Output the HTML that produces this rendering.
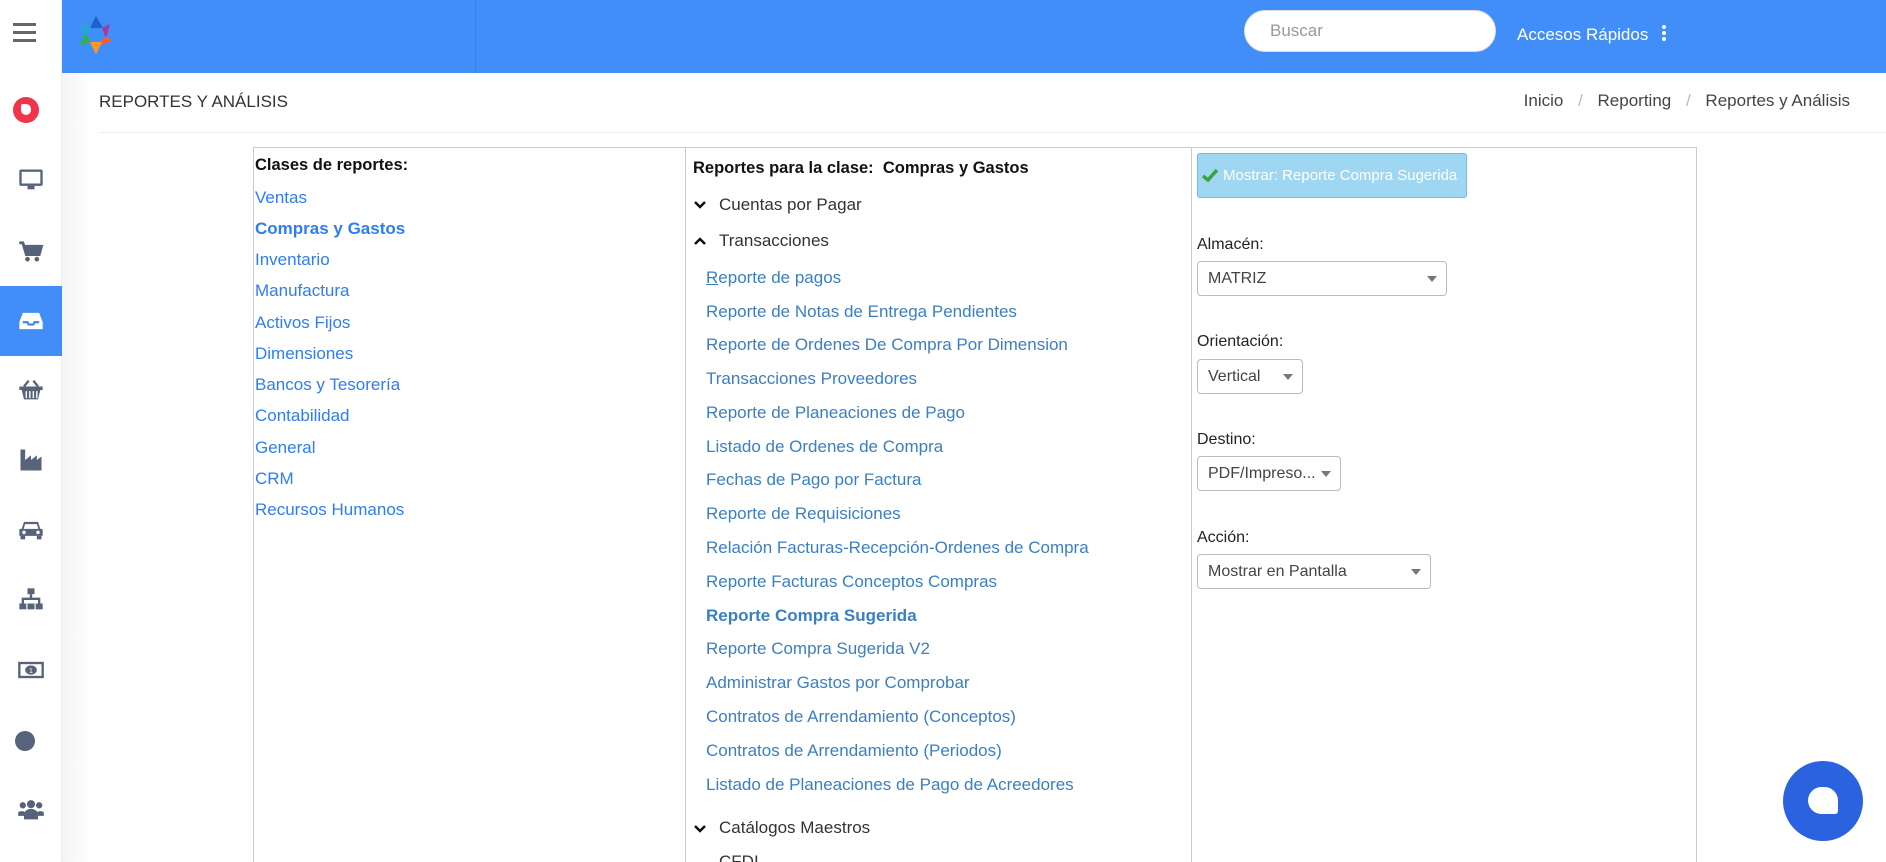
<!DOCTYPE html>
<html style="width:1886px;height:862px;overflow:hidden"><head><meta charset="utf-8">
<style>
*{box-sizing:border-box;margin:0;padding:0}
body{width:1886px;height:862px;overflow:hidden;background:#fff;font-family:"Liberation Sans",sans-serif;position:relative;color:#222}
.abs{position:absolute}
.side{left:0;top:0;width:62px;height:862px;background:#fff;border-right:1px solid #eee}
.hdr{left:62px;top:0;width:1824px;height:73px;background:#428ef8}
.ic{position:absolute;left:17px;width:28px;height:28px}
.t{position:absolute;white-space:nowrap}
.l1{color:#2e7cf6;font-size:17px}
.l2{color:#3a7fc4;font-size:17px}
.sel{position:absolute;border:1px solid #bbb;border-radius:4px;background:#fff;font-size:16px;color:#444;padding-left:10px;line-height:33px}
.sel:after{content:"";position:absolute;right:9px;top:14px;border-left:5px solid transparent;border-right:5px solid transparent;border-top:6px solid #777}
.lab{font-size:16px;color:#222}
</style></head><body>
<div class="abs side"></div>
<div class="abs" style="left:62px;top:73px;width:30px;height:789px;background:linear-gradient(90deg,#f4f4f4,#fff)"></div>
<div class="abs" style="left:13px;top:23px;width:23px;height:3px;background:#666"></div>
<div class="abs" style="left:13px;top:31px;width:23px;height:3px;background:#666"></div>
<div class="abs" style="left:13px;top:39px;width:23px;height:3px;background:#666"></div>
<div class="abs" style="left:13px;top:97px;width:26px;height:26px;border-radius:50%;background:#f0344a"></div>
<div class="abs" style="left:21px;top:104px;width:10px;height:11px;background:#fff;border-radius:2px 5px 5px 5px"></div>
<svg class="ic" style="top:166px" viewBox="0 0 24 24"><rect x="2" y="3" width="20" height="14" rx="1.5" fill="#56637a"/><rect x="4" y="5" width="16" height="10" fill="#fff"/><rect x="9" y="17" width="6" height="3" fill="#56637a"/></svg>
<svg class="ic" style="top:237px" viewBox="0 0 24 24"><path d="M2 5h3l3 10h11l2-7H7" fill="none" stroke="#56637a" stroke-width="2.5"/><circle cx="9" cy="19" r="2" fill="#56637a"/><circle cx="17" cy="19" r="2" fill="#56637a"/><rect x="7" y="8" width="13" height="6" fill="#56637a"/></svg>
<div class="abs" style="left:0;top:286px;width:62px;height:70px;background:#428ef8"></div>
<svg class="ic" style="top:307px" viewBox="0 0 24 24"><path d="M5 5h14l3 8v6H2v-6z" fill="#fff"/><path d="M5 13h4l1 2h4l1-2h4" stroke="#428ef8" stroke-width="2" fill="none"/></svg>
<svg class="ic" style="top:376px" viewBox="0 0 24 24"><path d="M6 9l4-5M18 9l-4-5" stroke="#56637a" stroke-width="2"/><rect x="2" y="9" width="20" height="3" fill="#56637a"/><path d="M4 12h16l-2 8H6z" fill="#56637a"/><path d="M8 13v6M11 13v6M14 13v6M17 13v6" stroke="#fff" stroke-width="1.2"/></svg>
<svg class="ic" style="top:446px" viewBox="0 0 24 24"><path d="M3 3h4v9l5-4v4l5-4v4l4-3v12H3z" fill="#56637a"/></svg>
<svg class="ic" style="top:516px" viewBox="0 0 24 24"><path d="M6 5h12l2 6h1a1 1 0 0 1 1 1v5H2v-5a1 1 0 0 1 1-1h1z" fill="#56637a"/><path d="M7 7h10l1.3 4H5.7z" fill="#fff"/><circle cx="6" cy="14" r="1.5" fill="#fff"/><circle cx="18" cy="14" r="1.5" fill="#fff"/><rect x="3" y="17" width="4" height="3" fill="#56637a"/><rect x="17" y="17" width="4" height="3" fill="#56637a"/></svg>
<svg class="ic" style="top:586px" viewBox="0 0 24 24"><rect x="9" y="2" width="6" height="5" fill="#56637a"/><path d="M12 7v4M5 15v-4h14v4" stroke="#56637a" stroke-width="2" fill="none"/><rect x="2" y="15" width="6" height="5" fill="#56637a"/><rect x="9" y="15" width="6" height="5" fill="#56637a"/><rect x="16" y="15" width="6" height="5" fill="#56637a"/></svg>
<svg class="ic" style="top:656px" viewBox="0 0 24 24"><rect x="1" y="5" width="22" height="14" fill="#56637a"/><rect x="3" y="7" width="18" height="10" fill="#fff"/><ellipse cx="12" cy="12" rx="5" ry="4" fill="#56637a"/><text x="10.3" y="14.5" font-size="6" fill="#fff" font-family="Liberation Sans">1</text></svg>
<div class="abs" style="left:15px;top:731px;width:20px;height:20px;border-radius:50%;background:#56637a"></div>
<svg class="ic" style="top:796px" viewBox="0 0 24 24"><circle cx="12" cy="7" r="3.5" fill="#56637a"/><circle cx="5" cy="8" r="2.7" fill="#56637a"/><circle cx="19" cy="8" r="2.7" fill="#56637a"/><path d="M6 20v-4a6 5 0 0 1 12 0v4z" fill="#56637a"/><path d="M1 17v-3a4 3 0 0 1 6 0v3zM17 17v-3a4 3 0 0 1 6 0v3z" fill="#56637a"/></svg>

<div class="abs hdr"></div>
<div class="abs" style="left:475px;top:0;width:1px;height:73px;background:#3a80e4"></div>
<svg class="abs" style="left:76px;top:14px" width="40" height="42" viewBox="0 0 40 42"><polygon points="20,2 27,14 14,14" fill="#1e62c9"/><polygon points="34,10 30,25 26,14" fill="#a53a9a"/><polygon points="36,27 22,32 30,22" fill="#ff5a2b"/><polygon points="20,40 14,28 26,28" fill="#ff9a1a"/><polygon points="4,32 10,18 14,28" fill="#2eb34a"/><polygon points="4,10 16,14 10,22" fill="#22a7d6"/></svg>
<div class="abs" style="left:1244px;top:10px;width:252px;height:42px;border-radius:21px;background:#fff;border:1px solid #ddd"></div>
<div class="t" style="left:1270px;top:21px;font-size:17px;color:#999">Buscar</div>
<div class="t" style="left:1517px;top:25px;font-size:17px;color:#fff">Accesos Rápidos</div>
<div class="abs" style="left:1662px;top:25px;width:4px;height:4px;border-radius:50%;background:#fff;box-shadow:0 6px 0 #fff,0 12px 0 #fff"></div>

<div class="t" style="left:99px;top:92px;font-size:17px;color:#333">REPORTES Y ANÁLISIS</div>
<div class="t" style="right:36px;top:91px;font-size:17px;color:#444">Inicio <span style="color:#bbb;margin:0 10px">/</span> Reporting <span style="color:#bbb;margin:0 10px">/</span> Reportes y Análisis</div>
<div class="abs" style="left:99px;top:132px;width:1787px;height:1px;background:#eee"></div>

<div class="abs" style="left:253px;top:147px;width:1444px;height:715px;border:1px solid #ccc;border-bottom:none"></div>
<div class="abs" style="left:685px;top:147px;width:1px;height:715px;background:#ccc"></div>
<div class="abs" style="left:1191px;top:147px;width:1px;height:715px;background:#ccc"></div>

<div class="t" style="left:255px;top:156px;font-size:16.5px;font-weight:bold;color:#111">Clases de reportes:</div>
<div class="t l1" style="left:255px;top:188px">Ventas</div>
<div class="t l1" style="left:255px;top:219px;font-weight:bold">Compras y Gastos</div>
<div class="t l1" style="left:255px;top:250px">Inventario</div>
<div class="t l1" style="left:255px;top:281px">Manufactura</div>
<div class="t l1" style="left:255px;top:313px">Activos Fijos</div>
<div class="t l1" style="left:255px;top:344px">Dimensiones</div>
<div class="t l1" style="left:255px;top:375px">Bancos y Tesorería</div>
<div class="t l1" style="left:255px;top:406px">Contabilidad</div>
<div class="t l1" style="left:255px;top:438px">General</div>
<div class="t l1" style="left:255px;top:469px">CRM</div>
<div class="t l1" style="left:255px;top:500px">Recursos Humanos</div>

<div class="t" style="left:693px;top:159px;font-size:16.5px;font-weight:bold;color:#111">Reportes para la clase:&nbsp; Compras y Gastos</div>
<svg class="abs" style="left:693px;top:200px" width="14" height="10"><path d="M2 2l5 5 5-5" stroke="#111" stroke-width="2.5" fill="none"/></svg>
<div class="t" style="left:719px;top:195px;font-size:17px;color:#333">Cuentas por Pagar</div>
<svg class="abs" style="left:693px;top:236px" width="14" height="10"><path d="M2 8l5-5 5 5" stroke="#111" stroke-width="2.5" fill="none"/></svg>
<div class="t" style="left:719px;top:231px;font-size:17px;color:#333">Transacciones</div>
<div class="t l2" style="left:706px;top:268px"><u style="text-decoration-thickness:1px">R</u>eporte de pagos</div>
<div class="t l2" style="left:706px;top:302px">Reporte de Notas de Entrega Pendientes</div>
<div class="t l2" style="left:706px;top:335px">Reporte de Ordenes De Compra Por Dimension</div>
<div class="t l2" style="left:706px;top:369px">Transacciones Proveedores</div>
<div class="t l2" style="left:706px;top:403px">Reporte de Planeaciones de Pago</div>
<div class="t l2" style="left:706px;top:437px">Listado de Ordenes de Compra</div>
<div class="t l2" style="left:706px;top:470px">Fechas de Pago por Factura</div>
<div class="t l2" style="left:706px;top:504px">Reporte de Requisiciones</div>
<div class="t l2" style="left:706px;top:538px">Relación Facturas-Recepción-Ordenes de Compra</div>
<div class="t l2" style="left:706px;top:572px">Reporte Facturas Conceptos Compras</div>
<div class="t l2" style="left:706px;top:606px;font-weight:bold">Reporte Compra Sugerida</div>
<div class="t l2" style="left:706px;top:639px">Reporte Compra Sugerida V2</div>
<div class="t l2" style="left:706px;top:673px">Administrar Gastos por Comprobar</div>
<div class="t l2" style="left:706px;top:707px">Contratos de Arrendamiento (Conceptos)</div>
<div class="t l2" style="left:706px;top:741px">Contratos de Arrendamiento (Periodos)</div>
<div class="t l2" style="left:706px;top:775px">Listado de Planeaciones de Pago de Acreedores</div>
<svg class="abs" style="left:693px;top:824px" width="14" height="10"><path d="M2 2l5 5 5-5" stroke="#111" stroke-width="2.5" fill="none"/></svg>
<div class="t" style="left:719px;top:818px;font-size:17px;color:#333">Catálogos Maestros</div>
<div class="t" style="left:719px;top:852px;font-size:17px;color:#333">CFDI</div>

<div class="abs" style="left:1197px;top:153px;width:270px;height:45px;background:#9fd6f1;border:1px solid #6cc0ea;border-radius:3px"></div>
<svg class="abs" style="left:1202px;top:168px" width="16" height="14"><path d="M1 8l5 4 9-10" stroke="#3aa33a" stroke-width="3.5" fill="none"/></svg>
<div class="t" style="left:1223px;top:167px;font-size:15px;color:#fff">Mostrar: Reporte Compra Sugerida</div>

<div class="t lab" style="left:1197px;top:236px">Almacén:</div>
<div class="sel" style="left:1197px;top:261px;width:250px;height:35px">MATRIZ</div>
<div class="t lab" style="left:1197px;top:333px">Orientación:</div>
<div class="sel" style="left:1197px;top:359px;width:106px;height:35px">Vertical</div>
<div class="t lab" style="left:1197px;top:431px">Destino:</div>
<div class="sel" style="left:1197px;top:456px;width:144px;height:35px">PDF/Impreso...</div>
<div class="t lab" style="left:1197px;top:529px">Acción:</div>
<div class="sel" style="left:1197px;top:554px;width:234px;height:35px">Mostrar en Pantalla</div>

<div class="abs" style="left:1783px;top:761px;width:80px;height:80px;border-radius:50%;background:#2a62e0"></div>
<div class="abs" style="left:1808px;top:787px;width:30px;height:27px;background:#fff;border-radius:14px 14px 3px 14px"></div>
</body></html>
